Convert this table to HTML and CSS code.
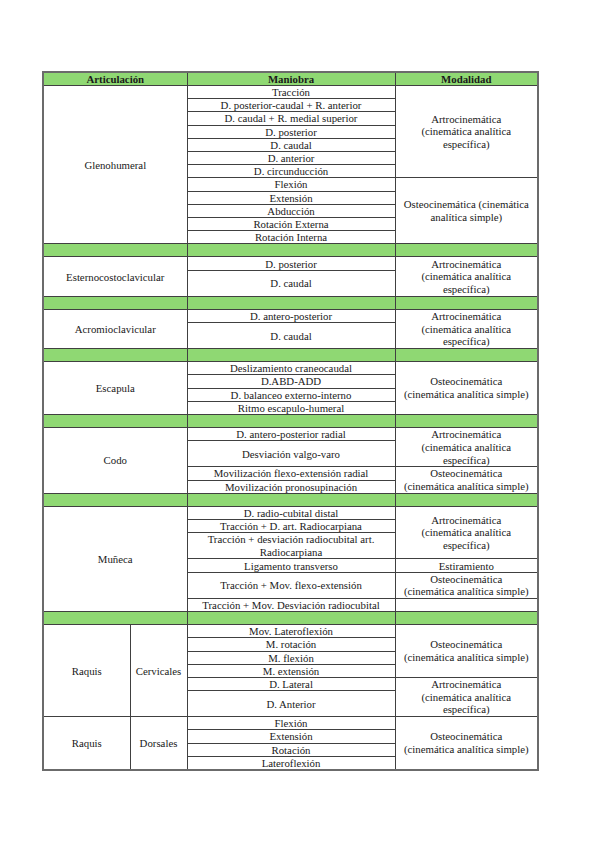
FILE: index.html
```html
<!DOCTYPE html>
<html lang="es">
<head>
<meta charset="utf-8">
<link rel="stylesheet" href="styles.css">
</head>
<body>
<table class="tabla">
<colgroup><col class="c1a"><col class="c1b"><col class="c2"><col class="c3"></colgroup>
<thead>
<tr class="head"><th colspan="2">Articulación</th><th>Maniobra</th><th>Modalidad</th></tr>
</thead>
<tbody>
<tr><td colspan="2" rowspan="12">Glenohumeral</td><td>Tracción</td><td rowspan="7" class="ml">Artrocinemática<br>(cinemática analítica<br>específica)</td></tr>
<tr><td>D. posterior-caudal + R. anterior</td></tr>
<tr><td>D. caudal + R. medial superior</td></tr>
<tr><td>D. posterior</td></tr>
<tr><td>D. caudal</td></tr>
<tr><td>D. anterior</td></tr>
<tr><td>D. circunducción</td></tr>
<tr><td>Flexión</td><td rowspan="5" class="ml">Osteocinemática (cinemática analítica simple)</td></tr>
<tr><td>Extensión</td></tr>
<tr><td>Abducción</td></tr>
<tr><td>Rotación Externa</td></tr>
<tr><td>Rotación Interna</td></tr>
<tr class="green"><td colspan="2"></td><td></td><td></td></tr>

<tr><td colspan="2" rowspan="2">Esternocostoclavicular</td><td>D. posterior</td><td rowspan="2" class="ml">Artrocinemática<br>(cinemática analítica<br>específica)</td></tr>
<tr class="h2"><td>D. caudal</td></tr>
<tr class="green"><td colspan="2"></td><td></td><td></td></tr>

<tr><td colspan="2" rowspan="2">Acromioclavicular</td><td>D. antero-posterior</td><td rowspan="2" class="ml">Artrocinemática<br>(cinemática analítica<br>específica)</td></tr>
<tr class="h2"><td>D. caudal</td></tr>
<tr class="green"><td colspan="2"></td><td></td><td></td></tr>

<tr><td colspan="2" rowspan="4">Escapula</td><td>Deslizamiento craneocaudal</td><td rowspan="4" class="ml">Osteocinemática<br>(cinemática analítica simple)</td></tr>
<tr><td>D.ABD-ADD</td></tr>
<tr><td>D. balanceo externo-interno</td></tr>
<tr><td>Ritmo escapulo-humeral</td></tr>
<tr class="green"><td colspan="2"></td><td></td><td></td></tr>

<tr><td colspan="2" rowspan="4">Codo</td><td>D. antero-posterior radial</td><td rowspan="2" class="ml">Artrocinemática<br>(cinemática analítica<br>específica)</td></tr>
<tr class="h2"><td>Desviación valgo-varo</td></tr>
<tr><td>Movilización flexo-extensión radial</td><td rowspan="2" class="ml">Osteocinemática<br>(cinemática analítica simple)</td></tr>
<tr><td>Movilización pronosupinación</td></tr>
<tr class="green"><td colspan="2"></td><td></td><td></td></tr>

<tr><td colspan="2" rowspan="6">Muñeca</td><td>D. radio-cubital distal</td><td rowspan="3" class="ml">Artrocinemática<br>(cinemática analítica<br>específica)</td></tr>
<tr><td>Tracción + D. art. Radiocarpiana</td></tr>
<tr class="h2"><td class="ml">Tracción + desviación radiocubital art.<br>Radiocarpiana</td></tr>
<tr><td>Ligamento transverso</td><td>Estiramiento</td></tr>
<tr class="h2"><td>Tracción + Mov. flexo-extensión</td><td class="ml">Osteocinemática<br>(cinemática analítica simple)</td></tr>
<tr><td>Tracción + Mov. Desviación radiocubital</td><td></td></tr>
<tr class="green"><td colspan="2"></td><td></td><td></td></tr>

<tr><td rowspan="6">Raquis</td><td rowspan="6">Cervicales</td><td>Mov. Lateroflexión</td><td rowspan="4" class="ml">Osteocinemática<br>(cinemática analítica simple)</td></tr>
<tr><td>M. rotación</td></tr>
<tr><td>M. flexión</td></tr>
<tr><td>M. extensión</td></tr>
<tr><td>D. Lateral</td><td rowspan="2" class="ml">Artrocinemática<br>(cinemática analítica<br>específica)</td></tr>
<tr class="h2"><td>D. Anterior</td></tr>

<tr><td rowspan="4">Raquis</td><td rowspan="4">Dorsales</td><td>Flexión</td><td rowspan="4" class="ml">Osteocinemática<br>(cinemática analítica simple)</td></tr>
<tr><td>Extensión</td></tr>
<tr><td>Rotación</td></tr>
<tr><td>Lateroflexión</td></tr>
</tbody>
</table>
</body>
</html>
```

FILE: styles.css
```css
html, body {
  margin: 0;
  padding: 0;
  background: #ffffff;
}
body {
  padding: 71px 0 0 42px;
  font-family: "Liberation Serif", "Times New Roman", Times, serif;
  font-size: 10.8px;
  color: #1a1a1a;
}
.tabla {
  border-collapse: collapse;
  width: 495px;
  table-layout: fixed;
  border: 2px solid #6b6b6b;
}
.c1a { width: 87px; }
.c1b { width: 57px; }
.c2 { width: 208px; }
.c3 { width: 143px; }
.tabla tr {
  height: 13.2px;
}
.tabla tr.h2 {
  height: 26px;
}
.tabla th,
.tabla td {
  border: 1px solid #404040;
  padding: 0 2px;
  text-align: center;
  vertical-align: middle;
  line-height: 12px;
  white-space: nowrap;
  overflow: hidden;
}
.tabla td.ml {
  line-height: 12.6px;
  white-space: normal;
}
.tabla th {
  background: #8fd873;
  font-weight: bold;
}
.green td {
  background: #8fd873;
}
```
